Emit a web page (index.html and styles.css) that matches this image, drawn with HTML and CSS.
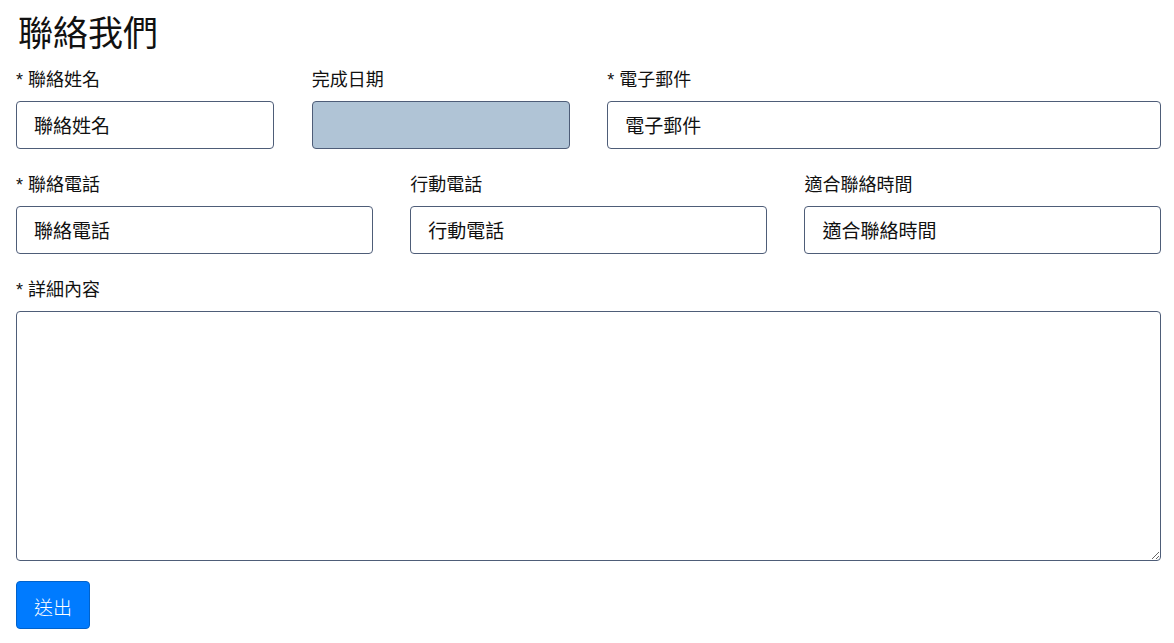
FILE: index.html
```html
<!DOCTYPE html>
<html lang="zh-Hant">
<head>
    <meta charset="UTF-8">
    <meta name="viewport" content="width=device-width, initial-scale=1.0">
    <title>聯絡我們</title>
    <link rel="stylesheet" href="styles.css">
</head>
<body>
    <div class="container">
        <h1 class="title">聯絡我們</h1>
        <form class="contact-form">
            <div class="field span-3">
                <label for="name">* 聯絡姓名</label>
                <input type="text" id="name" placeholder="聯絡姓名">
            </div>
            <div class="field span-3">
                <label for="doneDate">完成日期</label>
                <input type="text" id="doneDate" class="date-input" readonly>
            </div>
            <div class="field span-6">
                <label for="email">* 電子郵件</label>
                <input type="email" id="email" placeholder="電子郵件">
            </div>
            <div class="field span-4">
                <label for="phone">* 聯絡電話</label>
                <input type="text" id="phone" placeholder="聯絡電話">
            </div>
            <div class="field span-4">
                <label for="mobile">行動電話</label>
                <input type="text" id="mobile" placeholder="行動電話">
            </div>
            <div class="field span-4">
                <label for="contactTime">適合聯絡時間</label>
                <input type="text" id="contactTime" placeholder="適合聯絡時間">
            </div>
            <div class="field span-12">
                <label for="detail">* 詳細內容</label>
                <textarea id="detail"></textarea>
            </div>
            <div class="actions span-12">
                <button type="submit">送出</button>
            </div>
        </form>
    </div>
</body>
</html>
```

FILE: styles.css
```css
body {
    margin: 0;
    font-family: "Liberation Sans", "Noto Sans CJK TC", sans-serif;
    color: #212529;
    background: white;
}
.container {
    width: 1145px;
    margin-left: 16px;
}
.title {
    font-size: 35px;
    font-weight: normal;
    line-height: 38px;
    margin: 15px 0 13px 2px;
    color: #111;
}
.contact-form {
    display: grid;
    grid-template-columns: repeat(12, 1fr);
    column-gap: 37.6px;
    row-gap: 22px;
}
.span-3 { grid-column: span 3; }
.span-4 { grid-column: span 4; }
.span-6 { grid-column: span 6; }
.span-12 { grid-column: span 12; }
.field {
    display: flex;
    flex-direction: column;
}
label {
    font-size: 18px;
    line-height: 24px;
    padding-top: 2px;
    margin-bottom: 9px;
    color: #111;
}
input, textarea {
    box-sizing: border-box;
    width: 100%;
    height: 48px;
    padding: 3px 17px 0;
    border: 1px solid #4e5d78;
    border-radius: 4px;
    background: white;
    font-family: inherit;
    font-size: 19px;
    color: #111;
}
input::placeholder {
    color: #111;
    opacity: 1;
}
.date-input {
    background: #b0c4d6;
}
textarea {
    height: 250px;
    padding: 8px 17px;
    resize: vertical;
}
.actions {
    margin-top: -2px;
}
button {
    height: 48px;
    padding: 2px 17px 0;
    border: 1px solid #0062cc;
    border-radius: 4px;
    background: #007bff;
    color: white;
    font-family: inherit;
    font-size: 19px;
    font-weight: 300;
    cursor: pointer;
}
```
